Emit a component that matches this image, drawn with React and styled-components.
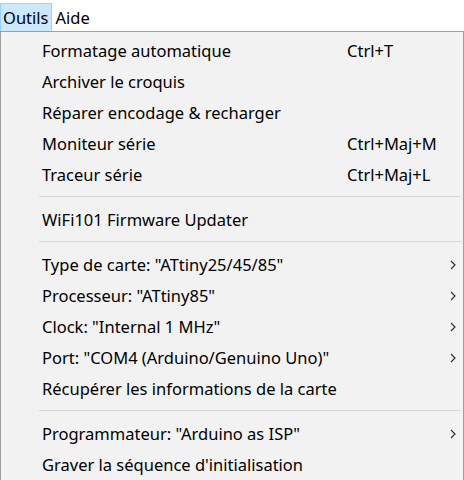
import React from 'react';
import styled, { createGlobalStyle } from 'styled-components';

const GlobalStyle = createGlobalStyle`
  body {
    margin: 0;
    background: #ffffff;
    font-family: "Noto Sans", "Open Sans", sans-serif;
  }
`;

const MenuBar = styled.div`
  display: flex;
  align-items: stretch;
  height: 31px;
  padding-top: 3px;
  box-sizing: border-box;
  background: #ffffff;
`;

const BarItem = styled.div`
  display: flex;
  align-items: center;
  padding: 0 3px 0 2px;
  font-size: 16.5px;
  color: #000;
  background: ${(p) => (p.active ? '#cce8ff' : 'transparent')};
  border: 1px solid ${(p) => (p.active ? '#99d1ff' : 'transparent')};
  border-bottom: none;
`;

const Menu = styled.div`
  width: 464px;
  box-sizing: border-box;
  background: #f2f2f2;
  border: 1px solid #a0a0a0;
  border-bottom: none;
  padding-top: 3px;
`;

const Row = styled.div`
  display: flex;
  align-items: center;
  height: 31px;
  font-size: 16.5px;
  color: #000;
`;

const Label = styled.span`
  flex: 1;
  padding-left: 41px;
  white-space: nowrap;
`;

const Shortcut = styled.span`
  width: 103px;
  white-space: nowrap;
`;

const Arrow = styled.span`
  width: 13px;
  display: flex;
  align-items: center;
`;

const Separator = styled.div`
  height: 1px;
  margin: 6px 2px 7px 38px;
  background: #d7d7d7;
`;

const Chevron = () => (
  <svg width="6" height="10" viewBox="0 0 6 10">
    <polyline points="1,1 5,5 1,9" fill="none" stroke="#333" strokeWidth="1.2" />
  </svg>
);

const groups = [
  [
    { label: 'Formatage automatique', shortcut: 'Ctrl+T' },
    { label: 'Archiver le croquis' },
    { label: 'Réparer encodage & recharger' },
    { label: 'Moniteur série', shortcut: 'Ctrl+Maj+M' },
    { label: 'Traceur série', shortcut: 'Ctrl+Maj+L' },
  ],
  [{ label: 'WiFi101 Firmware Updater' }],
  [
    { label: 'Type de carte: "ATtiny25/45/85"', sub: true },
    { label: 'Processeur: "ATtiny85"', sub: true },
    { label: 'Clock: "Internal 1 MHz"', sub: true },
    { label: 'Port: "COM4 (Arduino/Genuino Uno)"', sub: true },
    { label: 'Récupérer les informations de la carte' },
  ],
  [
    { label: 'Programmateur: "Arduino as ISP"', sub: true },
    { label: "Graver la séquence d'initialisation" },
  ],
];

export default function App() {
  return (
    <>
      <GlobalStyle />
      <MenuBar>
        <BarItem active>Outils</BarItem>
        <BarItem>Aide</BarItem>
      </MenuBar>
      <Menu>
        {groups.map((items, g) => (
          <React.Fragment key={g}>
            {g > 0 && <Separator />}
            {items.map((item) => (
              <Row key={item.label}>
                <Label>{item.label}</Label>
                <Shortcut>{item.shortcut}</Shortcut>
                <Arrow>{item.sub && <Chevron />}</Arrow>
              </Row>
            ))}
          </React.Fragment>
        ))}
      </Menu>
    </>
  );
}
